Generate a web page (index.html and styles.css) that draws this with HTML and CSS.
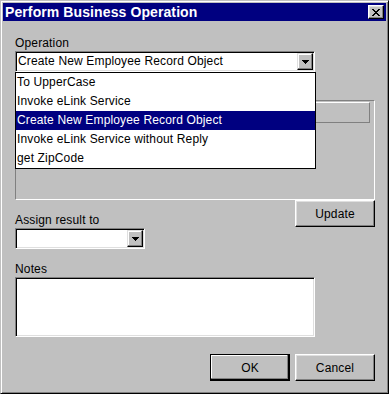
FILE: index.html
```html
<!DOCTYPE html>
<html lang="en">
  <head>
    <meta charset="UTF-8" />
    <meta name="viewport" content="width=device-width, initial-scale=1.0" />
    <title>Perform Business Operation</title>
    <link rel="stylesheet" href="styles.css">
  </head>
  <body>
    <div class="dialog">
      <div class="dialog__title">
        <span class="dialog__title--text">Perform Business Operation</span>
        <span class="dialog__close">
          <svg width="8" height="7" viewBox="0 0 8 7" shape-rendering="crispEdges"><path d="M0 0h2v1h-2zM6 0h2v1h-2zM1 1h2v1h-2zM5 1h2v1h-2zM2 2h4v1h-4zM3 3h2v1h-2zM2 4h4v1h-4zM1 5h2v1h-2zM5 5h2v1h-2zM0 6h2v1h-2zM6 6h2v1h-2z" fill="#000"/></svg>
        </span>
      </div>

      <div class="dialog__body">
        <p class="label">Operation</p>
        <div class="combo combo--wide">
          <span class="combo__value">Create New Employee Record Object</span>
          <span class="combo__btn">
            <svg width="7" height="4" viewBox="0 0 7 4" shape-rendering="crispEdges"><path d="M0 0h7v1h-1v1h-1v1h-1v1h-1v-1h-1v-1h-1v-1h-1z" fill="#000"/></svg>
          </span>
          <ul class="combo__list">
            <li class="combo__item">To UpperCase</li>
            <li class="combo__item">Invoke eLink Service</li>
            <li class="combo__item combo__item--selected">Create New Employee Record Object</li>
            <li class="combo__item">Invoke eLink Service without Reply</li>
            <li class="combo__item">get ZipCode</li>
          </ul>
        </div>

        <div class="panel">
          <div class="panel__bar"></div>
        </div>

        <div class="row">
          <div class="row__field">
            <p class="label">Assign result to</p>
            <div class="combo combo--small">
              <span class="combo__value"></span>
              <span class="combo__btn">
                <svg width="7" height="4" viewBox="0 0 7 4" shape-rendering="crispEdges"><path d="M0 0h7v1h-1v1h-1v1h-1v1h-1v-1h-1v-1h-1v-1h-1z" fill="#000"/></svg>
              </span>
            </div>
          </div>
          <button class="btn">Update</button>
        </div>

        <p class="label label--notes">Notes</p>
        <div class="notes"></div>

        <div class="dialog__btns">
          <button class="btn btn--default">OK</button>
          <button class="btn">Cancel</button>
        </div>
      </div>
    </div>
  </body>
</html>
```

FILE: styles.css
```css
*{margin:0;padding:0;box-sizing:border-box;}
body{background:#c0c0c0;font-family:"Liberation Sans",Arial,sans-serif;font-size:12px;letter-spacing:0.15px;color:#000;}

/* window frame */
.dialog{width:389px;height:394px;background:#c0c0c0;border:1px solid;border-color:#c0c0c0 #000 #000 #c0c0c0;box-shadow:inset 1px 1px #fff,inset -1px -1px #808080;padding:2px;}
.dialog__title{height:18px;background:#000080;display:flex;justify-content:space-between;align-items:center;padding:0 2px;}
.dialog__title--text{color:#fff;font-weight:bold;font-size:14px;line-height:18px;letter-spacing:0.1px;white-space:nowrap;}
.dialog__close{width:16px;height:14px;display:flex;justify-content:center;align-items:center;background:#c0c0c0;border:1px solid;border-color:#fff #000 #000 #fff;box-shadow:inset -1px -1px #808080,inset 1px 1px #dfdfdf;}
.dialog__body{padding:15px 11px 0 12px;}
.dialog__btns{margin-top:17px;display:flex;justify-content:flex-end;gap:5px;}

.label{line-height:15px;white-space:nowrap;}
.label--notes{margin-top:13px;}

/* combo boxes */
.combo{position:relative;display:flex;height:21px;background:#fff;border:1px solid;border-color:#808080 #fff #fff #808080;box-shadow:inset 1px 1px #000,inset -1px -1px #dfdfdf;padding:1px;}
.combo--wide{width:300px;}
.combo--small{width:130px;}
.combo__value{flex:1;line-height:17px;padding-left:1px;white-space:nowrap;overflow:hidden;}
.combo__btn{width:16px;height:17px;display:flex;justify-content:center;align-items:center;background:#c0c0c0;border:1px solid;border-color:#dfdfdf #000 #000 #dfdfdf;box-shadow:inset -1px -1px #808080,inset 1px 1px #fff;}
.combo__list{position:absolute;left:-1px;top:20px;width:301px;list-style:none;background:#fff;border:1px solid #000;z-index:2;}
.combo__item{line-height:19px;height:19px;padding-left:1px;white-space:nowrap;}
.combo__item--selected{background:#000080;color:#fff;}

/* panel behind list */
.panel{margin-top:28px;height:100px;border:1px solid;border-color:#808080 #fff #fff #808080;}
.panel__bar{height:21px;margin:1px 4px 0 1px;border:1px solid;border-color:#fff #808080 #808080 #fff;}

.row{display:flex;justify-content:space-between;align-items:flex-start;}
.row__field{margin-top:13px;}

.notes{width:300px;height:60px;background:#fff;border:1px solid;border-color:#808080 #fff #fff #808080;box-shadow:inset 1px 1px #000,inset -1px -1px #dfdfdf;}

/* buttons */
.btn{width:80px;height:27px;font-family:inherit;font-size:12px;letter-spacing:inherit;color:#000;background:#c0c0c0;border:1px solid;border-color:#fff #000 #000 #fff;box-shadow:inset -1px -1px #808080,inset 1px 1px #dfdfdf;cursor:pointer;}
.btn--default{border-color:#000;box-shadow:inset -1px -1px #000,inset -2px -2px #808080,inset 1px 1px #fff;}
```
